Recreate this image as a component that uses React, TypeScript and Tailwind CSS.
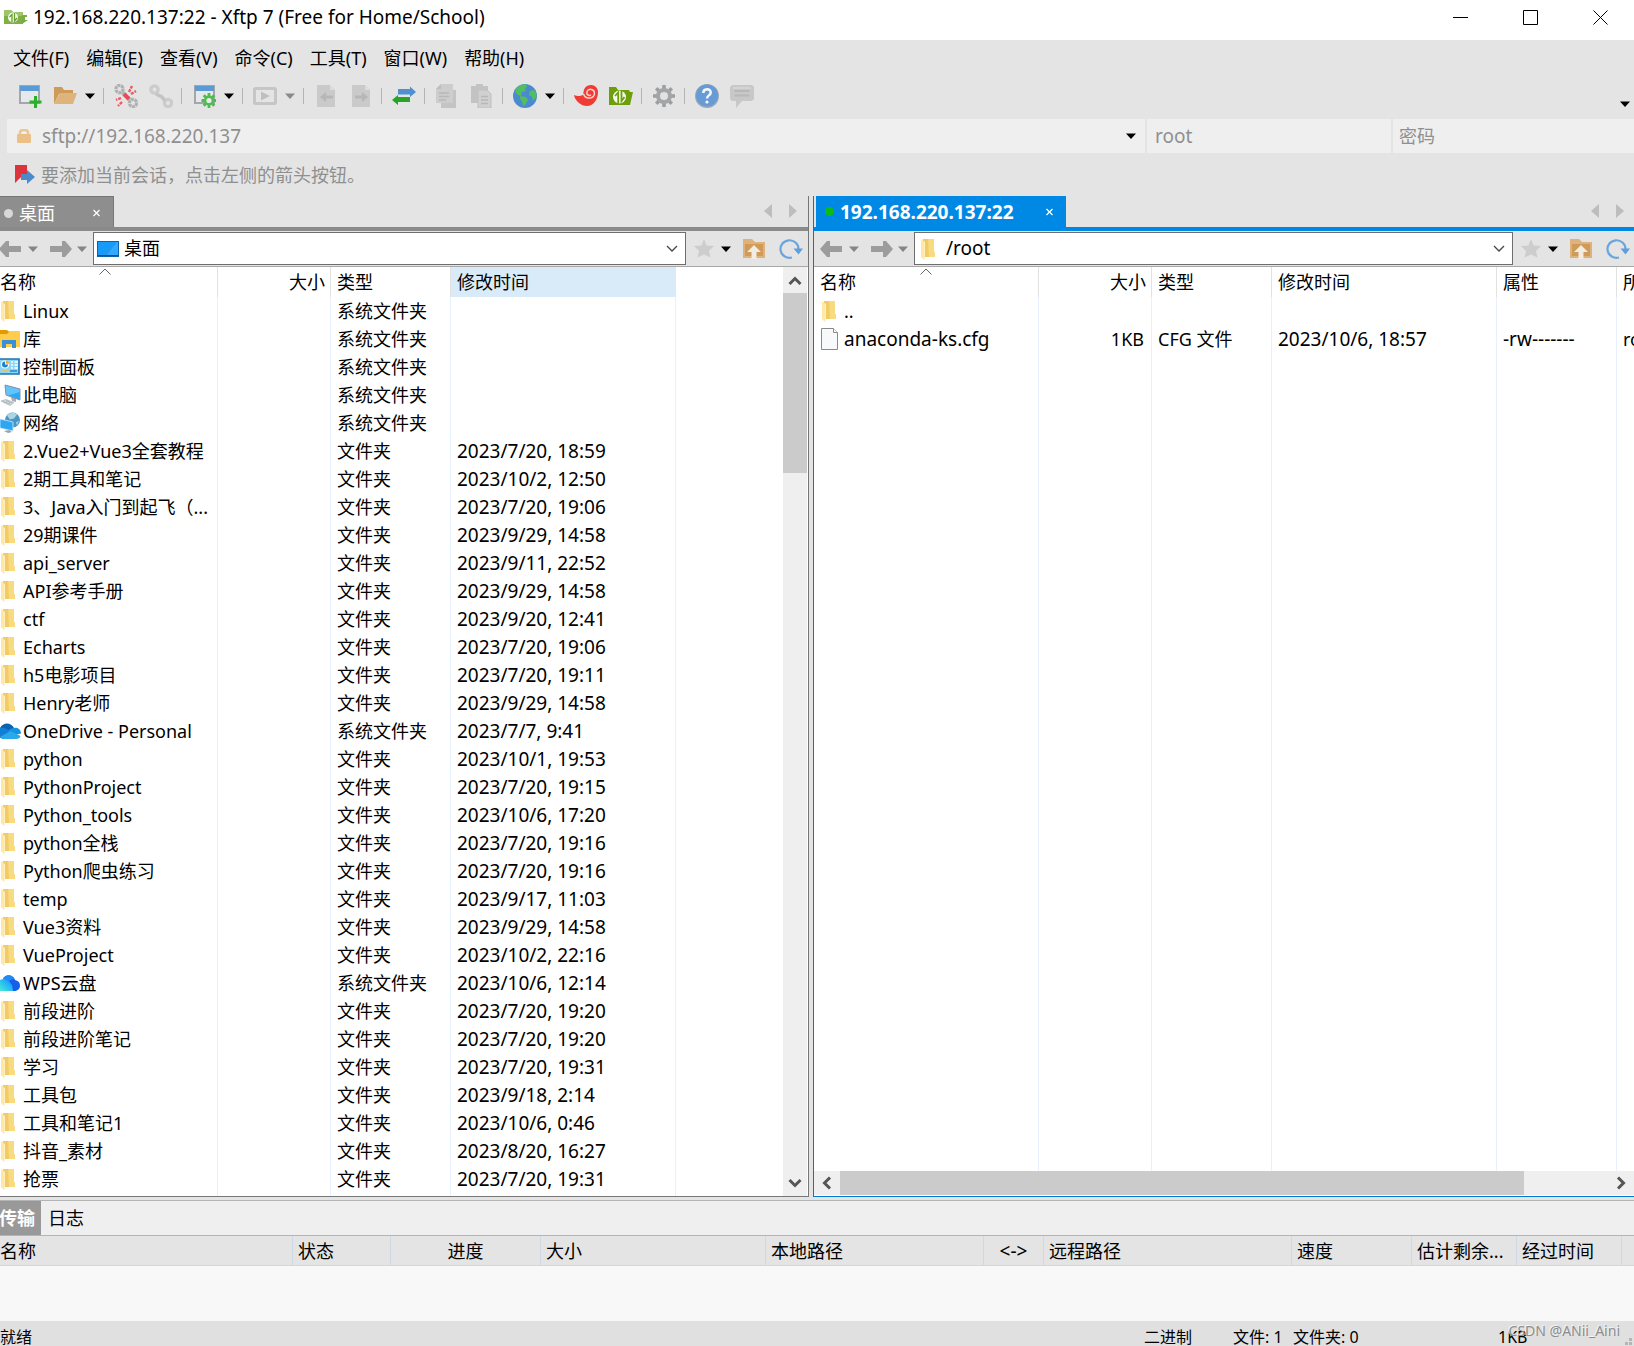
import React from "react";

type Kind = "folder" | "library" | "control" | "computer" | "network" | "onedrive" | "wps" | "file";
type Row = [Kind, string, string, string];

const S = "系统文件夹";
const F = "文件夹";

const localRows: Row[] = [
  ["folder", "Linux", S, ""],
  ["library", "库", S, ""],
  ["control", "控制面板", S, ""],
  ["computer", "此电脑", S, ""],
  ["network", "网络", S, ""],
  ["folder", "2.Vue2+Vue3全套教程", F, "2023/7/20, 18:59"],
  ["folder", "2期工具和笔记", F, "2023/10/2, 12:50"],
  ["folder", "3、Java入门到起飞（...", F, "2023/7/20, 19:06"],
  ["folder", "29期课件", F, "2023/9/29, 14:58"],
  ["folder", "api_server", F, "2023/9/11, 22:52"],
  ["folder", "API参考手册", F, "2023/9/29, 14:58"],
  ["folder", "ctf", F, "2023/9/20, 12:41"],
  ["folder", "Echarts", F, "2023/7/20, 19:06"],
  ["folder", "h5电影项目", F, "2023/7/20, 19:11"],
  ["folder", "Henry老师", F, "2023/9/29, 14:58"],
  ["onedrive", "OneDrive - Personal", S, "2023/7/7, 9:41"],
  ["folder", "python", F, "2023/10/1, 19:53"],
  ["folder", "PythonProject", F, "2023/7/20, 19:15"],
  ["folder", "Python_tools", F, "2023/10/6, 17:20"],
  ["folder", "python全栈", F, "2023/7/20, 19:16"],
  ["folder", "Python爬虫练习", F, "2023/7/20, 19:16"],
  ["folder", "temp", F, "2023/9/17, 11:03"],
  ["folder", "Vue3资料", F, "2023/9/29, 14:58"],
  ["folder", "VueProject", F, "2023/10/2, 22:16"],
  ["wps", "WPS云盘", S, "2023/10/6, 12:14"],
  ["folder", "前段进阶", F, "2023/7/20, 19:20"],
  ["folder", "前段进阶笔记", F, "2023/7/20, 19:20"],
  ["folder", "学习", F, "2023/7/20, 19:31"],
  ["folder", "工具包", F, "2023/9/18, 2:14"],
  ["folder", "工具和笔记1", F, "2023/10/6, 0:46"],
  ["folder", "抖音_素材", F, "2023/8/20, 16:27"],
  ["folder", "抢票", F, "2023/7/20, 19:31"],
];

/* ---------- file icons ---------- */

function FolderIcon() {
  return (
    <svg width="20" height="24" viewBox="0 0 20 24" className="block shrink-0">
      <path d="M3 2h11v13l1 1v4H3z" fill="#f2cb68" />
      <path d="M8 2h6v13l1 1v4H9z" fill="#f8da7f" />
      <path d="M1 2l4 3v14l-1 4-3-3z" fill="#ffe8a3" />
      <path d="M5 5v14l-1 4V5z" fill="#fff0c0" />
    </svg>
  );
}

function FileIcon({ kind }: { kind: Kind }) {
  switch (kind) {
    case "library":
      return (
        <svg width="20" height="24" viewBox="0 0 20 24" className="block shrink-0">
          <path d="M0 4h20v16H0z" fill="#ffcd4a" />
          <path d="M0 3h7l2 2-2 2H0z" fill="#e09b00" />
          <path d="M2 13h14v8h-4v-4H6v4H2z" fill="#3a8fd9" />
        </svg>
      );
    case "control":
      return (
        <svg width="20" height="24" viewBox="0 0 20 24" className="block shrink-0">
          <path d="M-1 4h20v15H-1z" fill="#8ad7fb" stroke="#1c74ad" strokeWidth="1.600" />
          <circle cx="5" cy="9.500" r="4" fill="#fff" />
          <path d="M5 9.500V6.500a3 3 0 1 0 3 3z" fill="#1f83c9" />
          <path d="M5.800 8.800V5.500A3.300 3.300 0 0 1 9 8.800z" fill="#f3a826" />
          <path d="M11 7h2M14.500 7H18M11 10h2M14.500 10H18M11 13h2M14.500 13H18" stroke="#fff" strokeWidth="1.500" />
          <path d="M1 16h8" stroke="#f3c14d" strokeWidth="1.400" />
          <path d="M10 16h7" stroke="#1f7fc0" strokeWidth="1.400" />
        </svg>
      );
    case "computer":
      return (
        <svg width="21" height="24" viewBox="0 0 21 24" className="block shrink-0">
          <path d="M11 14l5 1v4l-4-1z" fill="#a5adb6" />
          <path d="M5 2l15 4v11L6 12z" fill="#2ba8f7" />
          <path d="M5 2l15 4v3L8 12.500 6 12z" fill="#63c3fb" />
          <path d="M5 2l15 4v11L6 12z" fill="none" stroke="#8793a0" />
          <path d="M1 18l5-1.500 8 3-4 3z" fill="#d3d8dc" stroke="#aab1b8" strokeWidth=".7" />
          <path d="M3 18.500l7 2.500M6 17.500l6 2.500" stroke="#9ea6ae" strokeWidth=".7" />
        </svg>
      );
    case "network":
      return (
        <svg width="20" height="24" viewBox="0 0 20 24" className="block shrink-0">
          <circle cx="12.500" cy="9" r="7.500" fill="#4a95c2" />
          <path d="M7 4.500c3-4 8-3 10-1l-3 4-4 1zM16 11.500l3-2-2 5z" fill="#a9d5e8" />
          <path d="M0 8l13 3v9L0 17z" fill="#2da7f4" stroke="#d2e9f8" strokeWidth=".8" />
          <path d="M4 20l5-1 3 2-4 1z" fill="#9aa3ab" />
        </svg>
      );
    case "onedrive":
      return (
        <svg width="21" height="24" viewBox="0 0 21 24" className="block shrink-0">
          <path d="M0 9C3 3 11 3 14 9l-4 4-10 3z" fill="#0a62b5" />
          <path d="M0 9c4-1 7 1 10 3.500l-6 6.500H0z" fill="#1180d4" />
          <path d="M14 9c4-1 7 2 7 5.500l-8 2-5-5c2-1 4-3 6-2.500z" fill="#1593df" />
          <path d="M0 18L10.500 12l10 5c-.5 2-2 3-4.500 3H2z" fill="#2aa8ea" />
        </svg>
      );
    case "wps":
      return (
        <svg width="21" height="24" viewBox="0 0 21 24" className="block shrink-0">
          <defs>
            <linearGradient id="wpsWave" x1="0" x2="1" y1="1" y2="0">
              <stop offset="0" stopColor="#45ecd8" />
              <stop offset=".7" stopColor="#1fa6fb" />
              <stop offset="1" stopColor="#1b7df5" />
            </linearGradient>
          </defs>
          <path d="M3 8c2-5 10-5 12 1 4 1 5 3 5 6 0 3-3 5-6 5H4z" fill="#1560ea" />
          <path d="M0 9c2-1 3-1 4-1 5 0 6 4 8 6l1 6H0z" fill="url(#wpsWave)" />
          <path d="M3 8c2-5 9-5 11.500 0C12 8 10 9 8.500 10.500 7 9 5 8 3 8z" fill="#2388f8" />
        </svg>
      );
    case "file":
      return (
        <svg width="20" height="24" viewBox="0 0 20 24" className="block shrink-0">
          <path d="M.5 1.500h12l4 4v17H.5z" fill="#f7f9fa" stroke="#8a8a8a" />
          <path d="M12.500 1.500v4h4" fill="#fff" stroke="#8a8a8a" />
        </svg>
      );
    default:
      return <FolderIcon />;
  }
}

/* ---------- toolbar icons, 24 x 24 ---------- */

const icon = {
  newSession: (
    <>
      <rect x="2" y="2" width="19" height="17" fill="#e6e9ec" stroke="#a3a7ab" strokeWidth="2" />
      <rect x="2" y="2" width="19" height="5" fill="#5a9bd6" />
      <path d="M17.500 12v12M11.500 18h12" stroke="#2bb02b" strokeWidth="3" />
    </>
  ),
  open: (
    <>
      <path d="M1 3h8l2 3h9v4H6L1 20z" fill="#cf9b5b" />
      <path d="M7 9h17l-4 11H1z" fill="#deb47c" />
    </>
  ),
  disconnect: (
    <>
      <circle cx="5.500" cy="5" r="3.600" fill="none" stroke="#aeb0b2" strokeWidth="3.200" strokeDasharray="3 .6" />
      <circle cx="19" cy="19" r="3.600" fill="none" stroke="#aeb0b2" strokeWidth="3.200" strokeDasharray="3 .6" />
      <path d="M8 8l3 3M14 14l2 2" stroke="#b5b7b9" strokeWidth="4" />
      <path d="M10 10l5 5" stroke="#ea4a52" strokeWidth="4" />
      <path d="M15 8l3-6M17 10l5-3M7 14l-5 2M8 18l-4 4" stroke="#ea5a60" strokeWidth="2.400" strokeDasharray="3 1" />
    </>
  ),
  link: (
    <>
      <circle cx="5.500" cy="5.500" r="3.600" fill="none" stroke="#cccccc" strokeWidth="3.400" />
      <circle cx="19" cy="19" r="3.600" fill="none" stroke="#cccccc" strokeWidth="3.400" />
      <path d="M7 10l6 3 3 4" fill="none" stroke="#c4c4c4" strokeWidth="3.500" />
    </>
  ),
  windowGear: (
    <>
      <rect x="3" y="2" width="19" height="17" fill="#e6e9ec" stroke="#a3a7ab" strokeWidth="2" />
      <rect x="3" y="2" width="19" height="5" fill="#5a9bd6" />
      <path d="M17 9v15M9.500 16.500h15M11.700 11.200l10.600 10.600M22.300 11.200L11.700 21.800" stroke="#4fbb4f" strokeWidth="2.800" />
      <circle cx="17" cy="16.500" r="3.800" fill="#e8ece8" stroke="#52ba52" strokeWidth="2.400" />
    </>
  ),
  play: (
    <>
      <rect x="1.500" y="4.500" width="21" height="15" rx="1" fill="none" stroke="#c6c6c6" strokeWidth="3" />
      <path d="M8 7.500l9 4.500-9 4.500z" fill="#bfbfbf" />
    </>
  ),
  docLeft: (
    <>
      <path d="M3 1h13l5 5v17H3z" fill="#cacaca" />
      <path d="M16 1v5h5" fill="#dcdcdc" />
      <path d="M6 13l6-5v3.500h7v3h-7V18z" fill="#b7b7b7" />
    </>
  ),
  docRight: (
    <>
      <path d="M3 1h13l5 5v17H3z" fill="#cacaca" />
      <path d="M16 1v5h5" fill="#dcdcdc" />
      <path d="M19 13l-6-5v3.500H6v3h7V18z" fill="#b7b7b7" />
    </>
  ),
  swap: (
    <>
      <path d="M6 5h12V2.500L24 8l-6 5v-2.500H6z" fill="#508fd0" />
      <path d="M18 13v5H6v3l-6-5 6-5v2z" fill="#28a428" />
    </>
  ),
  copy: (
    <>
      <path d="M8 6h13v18H6V19z" fill="#c4c4c4" />
      <path d="M6 0h12v19H1V5z" fill="#cdcdcd" />
      <path d="M1 5l5-5v5z" fill="#bdbdbd" />
      <path d="M4 9h10M4 12.500h10M4 16h7" stroke="#b8b8b8" strokeWidth="1.500" />
    </>
  ),
  paste: (
    <>
      <path d="M1 2h5V0h7v2h5v17H1z" fill="#c3c3c3" />
      <path d="M8 6h9l4 4v14H8z" fill="#d0d0d0" stroke="#bfbfbf" />
      <path d="M11 12.500h7M11 16h7M11 19.500h7" stroke="#b8b8b8" strokeWidth="1.500" />
    </>
  ),
  globe: (
    <>
      <circle cx="12" cy="12" r="12" fill="#4a8bcf" />
      <path d="M3 5c2-3 5-4.500 9-5l2 2-2 3 1 2-4 1-1 4-3-1-3-3zM7 12l6 1 2 3-3 5-2 1-1-5-2-2zM17 7l4-1c2 2 3 4 2.500 7L20 17l-1-4-3-2z" fill="#52bd62" />
    </>
  ),
  shell: (
    <>
      <path d="M0 11c3 1.500 6 1.500 9.500-.5C9 5 12 1 17 1c4 0 7 3 7 7 0 8-5 14-11 14S1 17 0 11z" fill="#f03a34" />
      <path d="M9.500 10c2 6 11 5 11-1 0-4-6-5-7.500-1.500-1 3 2 5 4 3.200" fill="none" stroke="#f6d3d0" strokeWidth="1.500" />
    </>
  ),
  xftp: (
    <>
      <path d="M0 3h7l2 3h11l1 2h3l-3 13H0z" fill="#6d9f0c" />
      <circle cx="10.500" cy="13" r="6.500" fill="#f5f9ec" />
      <path d="M9.200 20V8.500L6 12M12.500 6v11l3-4" fill="none" stroke="#6d9f0c" strokeWidth="1.800" />
    </>
  ),
  gear: (
    <>
      <path d="M12 1v22M1 12h22M4.200 4.200l15.600 15.600M19.800 4.200L4.200 19.800" stroke="#9c9ea0" strokeWidth="3.600" />
      <circle cx="12" cy="12" r="6" fill="#e2e2e2" stroke="#a3a5a7" strokeWidth="4" />
    </>
  ),
  help: (
    <>
      <circle cx="12" cy="12" r="12" fill="#9aa9b8" />
      <circle cx="12" cy="11.500" r="11" fill="#669bd6" />
      <path d="M8.300 9c0-5 7.400-5 7.400-.5 0 3-3.700 2.800-3.700 6" fill="none" stroke="#f4f7fb" strokeWidth="2.500" />
      <circle cx="12" cy="18" r="1.600" fill="#f4f7fb" />
    </>
  ),
  chat: (
    <>
      <path d="M2 1h20l2 2v12l-2 2H12l-6 7v-7H2l-2-2V3z" fill="#c8c8c8" />
      <path d="M4.500 7h15M4.500 11.500h15" stroke="#b8b8b8" strokeWidth="2" />
      <path d="M3 4h18" stroke="#d4d4d4" strokeWidth="2" />
    </>
  ),
};

function Tool({ name, label, first }: { name: keyof typeof icon; label: string; first?: boolean }) {
  return (
    <button type="button" aria-label={label} className={first ? "" : "ml-[11px]"}>
      <svg width="24" height="24" viewBox="0 0 24 24" className="block">
        {icon[name]}
      </svg>
    </button>
  );
}

function Caret({ color = "#000" }: { color?: string }) {
  return (
    <svg width="10" height="6" viewBox="0 0 10 6" className="block shrink-0">
      <path d="M0 .5h10L5 6z" fill={color} />
    </svg>
  );
}

function ToolCaret({ label, color }: { label: string; color?: string }) {
  return (
    <button type="button" aria-label={label} className="ml-2">
      <Caret color={color} />
    </button>
  );
}

function Sep({ next }: { next: React.ReactElement }) {
  return (
    <>
      <span className="ml-2 mr-[10px] h-4 w-px bg-[#b4b4b4]" />
      {next}
    </>
  );
}

function TitleBar() {
  return (
    <header className="flex h-10 items-center bg-white pb-1.5 pl-1">
      <svg width="24" height="18" viewBox="0 0 24 18" className="block shrink-0">
        <path d="M0 2h7l2 2h10v12H0z" fill="#7fb044" />
        <path d="M0 2h7l2 2h10v4H0z" fill="#9cc468" />
        <path d="M18 7h5v2h-2v3h3l-6 4z" fill="#7cab45" />
        <circle cx="9" cy="9.500" r="5" fill="#f3f8ec" />
        <path d="M8 14V6.500L5.500 9M10.500 5v8l2.500-3" fill="none" stroke="#6b9e32" strokeWidth="1.300" />
      </svg>
      <h1 className="ml-[5px] text-[19px] leading-6">192.168.220.137:22 - Xftp 7 (Free for Home/School)</h1>
      <div className="ml-auto flex items-center gap-[54px] pr-[25px]">
        <button type="button" aria-label="最小化">
          <svg width="16" height="16" viewBox="0 0 16 16" className="block"><path d="M0 8.500h15" stroke="#000" /></svg>
        </button>
        <button type="button" aria-label="最大化">
          <svg width="16" height="16" viewBox="0 0 16 16" className="block"><path d="M.5 1.500h14v14H.5z" fill="none" stroke="#000" /></svg>
        </button>
        <button type="button" aria-label="关闭">
          <svg width="16" height="16" viewBox="0 0 16 16" className="block"><path d="M.5 1.500l14 14M14.500 1.500l-14 14" stroke="#000" /></svg>
        </button>
      </div>
    </header>
  );
}

function MenuBar() {
  const items = ["文件(F)", "编辑(E)", "查看(V)", "命令(C)", "工具(T)", "窗口(W)", "帮助(H)"];
  return (
    <nav className="flex h-9 items-center gap-[17px] pl-[13px]">
      {items.map((m) => (
        <button type="button" key={m} className="whitespace-nowrap">{m}</button>
      ))}
    </nav>
  );
}

function Toolbar() {
  return (
    <div className="flex h-[43px] items-center pb-[3px] pl-[18px]">
      <Tool name="newSession" label="新建" first />
      <Tool name="open" label="打开" />
      <ToolCaret label="打开选项" />
      <Sep next={<Tool name="disconnect" label="断开" first />} />
      <Tool name="link" label="重新连接" />
      <Sep next={<Tool name="windowGear" label="属性" first />} />
      <ToolCaret label="属性选项" />
      <Sep next={<Tool name="play" label="运行" first />} />
      <ToolCaret label="运行选项" color="#8a8a8a" />
      <Sep next={<Tool name="docLeft" label="向左传输" first />} />
      <Tool name="docRight" label="向右传输" />
      <Sep next={<Tool name="swap" label="同步" first />} />
      <Sep next={<Tool name="copy" label="复制" first />} />
      <Tool name="paste" label="粘贴" />
      <Sep next={<Tool name="globe" label="语言" first />} />
      <ToolCaret label="语言选项" />
      <Sep next={<Tool name="shell" label="Xshell" first />} />
      <Tool name="xftp" label="Xftp" />
      <Sep next={<Tool name="gear" label="选项" first />} />
      <Sep next={<Tool name="help" label="帮助" first />} />
      <Tool name="chat" label="反馈" />
      <button type="button" aria-label="更多工具" className="ml-auto mr-1 pt-4">
        <Caret />
      </button>
    </div>
  );
}

function AddressBar() {
  return (
    <div className="flex h-[34px] gap-0.5 pl-[7px] text-[#8f8f8f]">
      <div className="flex flex-1 items-center bg-[#efefef]">
        <svg width="14" height="14" viewBox="0 0 14 14" className="ml-[10px] block shrink-0">
          <path d="M3 6V3.500C3 0 11 0 11 3.500V6" fill="none" stroke="#e9c594" strokeWidth="2.500" />
          <rect y="5" width="14" height="9" rx="1" fill="#e9c188" />
        </svg>
        <input aria-label="主机" defaultValue="sftp://192.168.220.137" className="ml-[11px] min-w-0 flex-1 bg-transparent text-[19px] outline-none" />
        <button type="button" aria-label="主机历史" className="mr-[9px]"><Caret /></button>
      </div>
      <input aria-label="用户名" placeholder="root" className="w-[244px] bg-[#efefef] px-2 text-[19px] outline-none placeholder:text-[#8f8f8f]" />
      <input aria-label="密码" type="password" placeholder="密码" className="w-[241px] bg-[#efefef] px-1.5 outline-none placeholder:text-[#8f8f8f]" />
    </div>
  );
}

function Hint() {
  return (
    <div className="flex h-[43px] items-center pl-[15px] text-[#8f8f8f]">
      <svg width="20" height="20" viewBox="0 0 20 20" className="block shrink-0">
        <path d="M0 0h12v11H7l-7 7z" fill="#dc333c" />
        <path d="M6 9h6V5l8 7-8 7v-4H6z" fill="#4c8bcb" />
      </svg>
      <span className="ml-1.5">要添加当前会话，点击左侧的箭头按钮。</span>
    </div>
  );
}

function Arrow({ flip }: { flip?: boolean }) {
  return (
    <svg width="23" height="18" viewBox="0 0 23 18" className={flip ? "block -scale-x-100" : "block"}>
      <path d="M0 9l7-8h3v5h12v6H10v5H7z" fill="#9c9c9c" />
    </svg>
  );
}

function Nav({ path, active }: { path: string; active?: boolean }) {
  return (
    <div className={active ? "flex h-9 items-center border-b border-[#a8a8a8] bg-[#e4e4e4] pl-1.5" : "flex h-9 items-center border-b border-[#a8a8a8] bg-[#e4e4e4]"}>
      <button type="button" aria-label="后退" className={active ? "" : "-ml-px"}><Arrow /></button>
      <button type="button" aria-label="后退历史" className="ml-1.5"><Caret color="#858585" /></button>
      <button type="button" aria-label="前进" className="ml-[11px]"><Arrow flip /></button>
      <button type="button" aria-label="前进历史" className="ml-[5px]"><Caret color="#858585" /></button>
      <div className="ml-1.5 flex h-[33px] min-w-0 flex-1 items-center border border-[#6e6e6e] bg-white">
        {active ? (
          <span className="ml-[5px]"><FolderIcon /></span>
        ) : (
          <svg width="22" height="16" viewBox="0 0 22 16" className="ml-[3px] block shrink-0">
            <rect x=".5" y=".5" width="21" height="15" fill="#189bf8" stroke="#0e64a8" />
            <path d="M9 15L20 1h1v14z" fill="#33a9ff" />
            <path d="M1 14.500h20" stroke="#0b4f87" />
          </svg>
        )}
        <input aria-label="路径" defaultValue={path} className={active ? "ml-1.5 min-w-0 flex-1 bg-transparent pb-0.5 text-[19px] outline-none" : "ml-[5px] min-w-0 flex-1 bg-transparent pb-0.5 outline-none"} />
        <button type="button" aria-label="路径历史" className="mr-[7px]">
          <svg width="12" height="8" viewBox="0 0 12 8" className="block"><path d="M1 1l5 5 5-5" fill="none" stroke="#444" strokeWidth="1.300" /></svg>
        </button>
      </div>
      <button type="button" aria-label="收藏" className="ml-2">
        <svg width="20" height="20" viewBox="0 0 20 20" className="block"><path d="M10 0l2.600 6.500L20 7l-5 5 1.500 6.500L10 15.500 3.500 18.500 5 12 0 7l7.400-.5z" fill="#cdcdcd" /></svg>
      </button>
      <button type="button" aria-label="收藏列表" className="ml-[7px]"><Caret /></button>
      <button type="button" aria-label="上级目录" className="ml-3">
        <svg width="22" height="20" viewBox="0 0 22 20" className="block">
          <path d="M0 0h9l3 3h10v16H0z" fill="#ddb27c" />
          <path d="M2 5h18v12H2z" fill="#d09a58" />
          <path d="M11 6l7 7h-4.500v7h-5v-7H4z" fill="#f3ece3" />
        </svg>
      </button>
      <button type="button" aria-label="刷新" className={active ? "ml-3.5 mr-1" : "ml-3.5 mr-[5px]"}>
        <svg width="24" height="20" viewBox="0 0 24 20" className="block">
          <path d="M19.500 10A9 8.800 0 1 0 13 18.500" fill="none" stroke="#6ba5dd" strokeWidth="2.200" />
          <path d="M14.500 9.500H24L19.500 15.500z" fill="#5d9edd" />
        </svg>
      </button>
    </div>
  );
}

function TabStrip({ title, active }: { title: string; active?: boolean }) {
  return (
    <div className={active ? "flex h-[35px] border-b-4 border-[#0089e4]" : "flex h-[35px] border-b-4 border-[#8a8a8a]"}>
      <div className={active ? "ml-0.5 flex w-[250px] items-center bg-[#0089e4] pl-[9px] text-white" : "flex w-[114px] items-center border-r border-t border-[#777777] bg-[#8e8e8e] pl-1 pt-0.5 text-white"}>
        <span className={active ? "size-[9px] rounded-full bg-[#0dbb17]" : "size-[9px] rounded-full bg-[#d8d8d8]"} />
        <span className={active ? "ml-1.5 text-[19px] font-bold" : "ml-1.5"}>{title}</span>
        <button type="button" aria-label="关闭标签" className="ml-auto mr-3">
          <svg width="8" height="8" viewBox="0 0 8 8" className="block"><path d="M.5 1l6 6M6.500 1l-6 6" stroke="#fff" strokeWidth="1.200" /></svg>
        </button>
      </div>
      <div className={active ? "ml-auto mr-2.5 flex items-center gap-[17px] pb-0.5" : "ml-auto mr-[11px] flex items-center gap-[17px] pb-0.5"}>
        <button type="button" aria-label="上一个标签"><svg width="8" height="14" viewBox="0 0 8 14" className="block"><path d="M8 0v14L0 7z" fill="#bdbdbd" /></svg></button>
        <button type="button" aria-label="下一个标签"><svg width="8" height="14" viewBox="0 0 8 14" className="block"><path d="M0 0v14l8-7z" fill="#bdbdbd" /></svg></button>
      </div>
    </div>
  );
}

function Chevron({ d }: { d: string }) {
  return (
    <svg width="14" height="14" viewBox="0 0 14 14" className="block"><path d={d} fill="none" stroke="#555" strokeWidth="3" /></svg>
  );
}

function SortMark({ className }: { className: string }) {
  return (
    <svg width="12" height="7" viewBox="0 0 12 7" className={className}><path d="M.5 6.500L6 1l5.500 5.500" fill="none" stroke="#666" /></svg>
  );
}

const head = "h-[30px] border-r border-[#e2e2e2] p-0 pl-1.5 text-left font-normal";
const headRight = "h-[30px] border-r border-[#e2e2e2] p-0 pr-[5px] text-right font-normal";
const cell = "h-7 border-r border-[#e6f1fd] p-0 pl-1.5 whitespace-nowrap";
const filler = "border-r border-[#e6f1fd] p-0";

function LocalTable() {
  return (
    <table className="h-full w-full table-fixed border-separate border-spacing-0 leading-6">
      <colgroup>
        <col className="w-[218px]" />
        <col className="w-[113px]" />
        <col className="w-[120px]" />
        <col className="w-[225px]" />
        <col />
      </colgroup>
      <thead>
        <tr>
          <th className="relative h-[30px] border-r border-[#e2e2e2] p-0 text-left font-normal">
            名称<SortMark className="absolute left-1/2 top-px -ml-2.5" />
          </th>
          <th className={headRight}>大小</th>
          <th className={head}>类型</th>
          <th className="h-[30px] border-r border-[#d9ebf9] bg-[#d9ebf9] p-0 pl-1.5 text-left font-normal">修改时间</th>
          <th />
        </tr>
      </thead>
      <tbody>
        {localRows.map(([kind, name, type, date]) => (
          <tr key={name}>
            <td className="h-7 overflow-hidden whitespace-nowrap border-r border-[#e6f1fd] p-0">
              <div className="flex items-center">
                <span className="w-[23px] shrink-0"><FileIcon kind={kind} /></span>
                {name}
              </div>
            </td>
            <td className={cell} />
            <td className={cell}>{type}</td>
            <td className={cell + " text-[19px]"}>{date}</td>
            <td />
          </tr>
        ))}
        <tr>
          <td className={filler} />
          <td className={filler} />
          <td className={filler} />
          <td className={filler} />
          <td />
        </tr>
      </tbody>
    </table>
  );
}

function RemoteTable() {
  return (
    <table className="h-full w-full table-fixed border-separate border-spacing-0 leading-6">
      <colgroup>
        <col className="w-[225px]" />
        <col className="w-[113px]" />
        <col className="w-[120px]" />
        <col className="w-[225px]" />
        <col className="w-[120px]" />
        <col />
      </colgroup>
      <thead>
        <tr>
          <th className={head + " relative"}>
            名称<SortMark className="absolute left-1/2 top-px -ml-1.5" />
          </th>
          <th className={headRight}>大小</th>
          <th className={head}>类型</th>
          <th className={head}>修改时间</th>
          <th className={head}>属性</th>
          <th className="overflow-hidden whitespace-nowrap p-0 pl-1.5 text-left font-normal">所有者</th>
        </tr>
      </thead>
      <tbody>
        <tr>
          <td className="h-7 border-r border-[#e6f1fd] p-0 pl-[7px]">
            <div className="flex items-center"><span className="w-[23px]"><FileIcon kind="folder" /></span>..</div>
          </td>
          <td className={cell} />
          <td className={cell} />
          <td className={cell} />
          <td className={cell} />
          <td />
        </tr>
        <tr>
          <td className="h-7 border-r border-[#e6f1fd] p-0 pl-[7px]">
            <div className="flex items-center"><span className="w-[23px]"><FileIcon kind="file" /></span><span className="text-[19px]">anaconda-ks.cfg</span></div>
          </td>
          <td className="h-7 border-r border-[#e6f1fd] p-0 pr-[7px] text-right">1KB</td>
          <td className={cell}>CFG 文件</td>
          <td className={cell + " text-[19px]"}>2023/10/6, 18:57</td>
          <td className={cell + " text-[19px]"}>-rw-------</td>
          <td className="overflow-hidden p-0 pl-1.5">root</td>
        </tr>
        <tr>
          <td className={filler} />
          <td className={filler} />
          <td className={filler} />
          <td className={filler} />
          <td className={filler} />
          <td />
        </tr>
      </tbody>
    </table>
  );
}

function Transfers() {
  const th = "border-r border-[#cdd9e6] p-0 pl-[5px] text-left font-normal whitespace-nowrap";
  return (
    <section className="mt-[3px] border-t border-[#b4b4b4]">
      <div role="tablist" className="flex h-[34px] bg-[#efefef]">
        <button type="button" role="tab" aria-selected="true" className="w-[41px] bg-[#999999] pr-1.5 font-bold text-white">
          <span className="-ml-px whitespace-nowrap">传输</span>
        </button>
        <button type="button" role="tab" aria-selected="false" className="px-[7px]">日志</button>
      </div>
      <table className="w-full table-fixed border-separate border-spacing-0 border-b border-t border-b-[#cdd9e6] border-t-[#b4b4b4] leading-6">
        <colgroup>
          <col className="w-[293px]" />
          <col className="w-[98px]" />
          <col className="w-[150px]" />
          <col className="w-[225px]" />
          <col className="w-[218px]" />
          <col className="w-[60px]" />
          <col className="w-[248px]" />
          <col className="w-[120px]" />
          <col className="w-[105px]" />
          <col className="w-[105px]" />
          <col />
        </colgroup>
        <thead>
          <tr className="h-[29px]">
            <th className="border-r border-[#cdd9e6] p-0 text-left font-normal">名称</th>
            <th className={th}>状态</th>
            <th className="border-r border-[#cdd9e6] p-0 text-center font-normal">进度</th>
            <th className={th}>大小</th>
            <th className={th}>本地路径</th>
            <th className="border-r border-[#cdd9e6] p-0 text-center text-[19px] font-normal">&lt;-&gt;</th>
            <th className={th}>远程路径</th>
            <th className={th}>速度</th>
            <th className={th}>估计剩余...</th>
            <th className={th}>经过时间</th>
            <th />
          </tr>
        </thead>
      </table>
      <div className="h-[55px] bg-[#f8f8f8]" />
    </section>
  );
}

function StatusBar() {
  return (
    <footer className="relative flex h-[25px] items-center overflow-hidden bg-[#e0e0e0] pt-1.5 text-[16px] leading-5">
      <span>就绪</span>
      <div className="ml-auto flex">
        <span className="w-[89px]">二进制</span>
        <span className="w-[60px]">文件: 1</span>
        <span className="w-[205px]">文件夹: 0</span>
        <span className="w-[136px]">1KB</span>
      </div>
      <span className="absolute right-3.5 top-0 text-[14px] leading-5 text-[#8d8d8d] [text-shadow:-1px_-1px_0_#f4f4f4]">CSDN @ANii_Aini</span>
      <svg width="7" height="7" viewBox="0 0 7 7" className="absolute bottom-px right-0.5"><path d="M4 0h3v3H4zM0 4h3v3H0zM4 4h3v3H4z" fill="#b5b5b5" /></svg>
    </footer>
  );
}

export default function App() {
  return (
    <div className="flex min-h-screen flex-col overflow-hidden bg-[#e4e4e4] font-['Noto_Sans','Noto_Sans_CJK_SC',sans-serif] text-[18px] font-normal leading-6 text-black">
      <TitleBar />
      <MenuBar />
      <Toolbar />
      <AddressBar />
      <Hint />
      <main className="flex flex-1 gap-1">
        <section className="flex min-w-0 flex-[809] flex-col border-b border-r border-[#777777]">
          <TabStrip title="桌面" />
          <Nav path="桌面" />
          <div className="flex flex-1 bg-white">
            <div className="min-w-0 flex-1"><LocalTable /></div>
            <div className="mr-px flex w-6 flex-col items-center bg-[#efefef]">
              <button type="button" aria-label="向上滚动" className="flex h-[26px] shrink-0 items-center"><Chevron d="M1.500 11L7 5.500 12.500 11" /></button>
              <div className="flex-1 self-stretch"><div className="h-[180px] bg-[#cbcbcb]" /></div>
              <button type="button" aria-label="向下滚动" className="flex h-[26px] shrink-0 items-center"><Chevron d="M1.500 4L7 9.500 12.500 4" /></button>
            </div>
          </div>
        </section>
        <section className="flex min-w-0 flex-[821] flex-col border-b border-l border-[#0078cc]">
          <TabStrip title="192.168.220.137:22" active />
          <Nav path="/root" active />
          <div className="flex flex-1 flex-col bg-white">
            <div className="flex-1"><RemoteTable /></div>
            <div className="mb-px flex h-6 items-stretch bg-[#efefef]">
              <button type="button" aria-label="向左滚动" className="flex w-[26px] items-center justify-center"><Chevron d="M10 1.500L4.500 7 10 12.500" /></button>
              <div className="flex-1"><div className="h-full w-[89%] bg-[#cbcbcb]" /></div>
              <button type="button" aria-label="向右滚动" className="flex w-[26px] items-center justify-center"><Chevron d="M4 1.500L9.500 7 4 12.500" /></button>
            </div>
          </div>
        </section>
      </main>
      <Transfers />
      <StatusBar />
    </div>
  );
}
